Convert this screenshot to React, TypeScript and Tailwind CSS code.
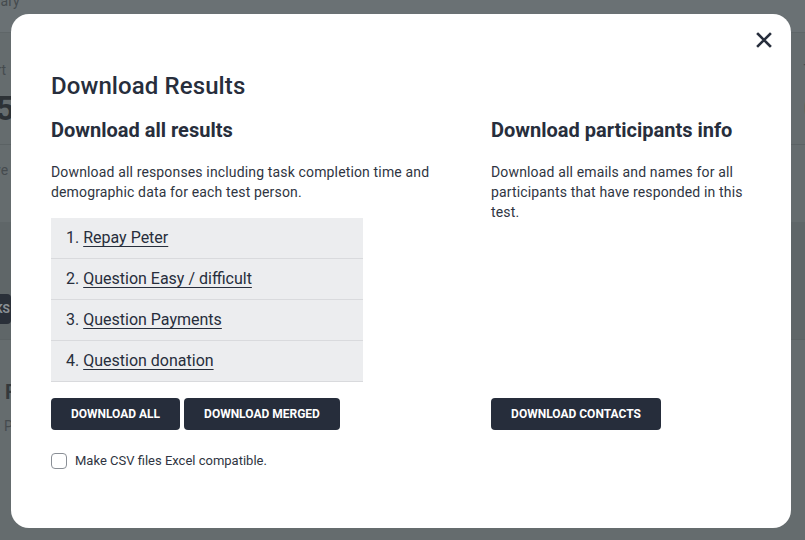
import React from "react";

const items = ["Repay Peter", "Question Easy / difficult", "Question Payments", "Question donation"];

export default function App() {
  return (
    <div
      className="relative w-[805px] h-[540px] overflow-hidden bg-[#656c6e]"
      style={{ fontFamily: "Roboto, 'Noto Sans', sans-serif" }}
    >
      {/* dimmed background page */}
      <div className="flex flex-col text-[#454b4e]">
        <div className="h-[33px] bg-[#6a7174] border-b border-[#5f6668] flex items-start">
          <span className="-ml-[40px] -mt-[9px] text-[14px]">Summary</span>
        </div>
        <div className="h-[112px] border-b border-[#5b6264] flex justify-between">
          <div className="-ml-[24px] pt-[28px] flex flex-col">
            <span className="text-[14px] leading-[18px]">Start</span>
            <span className="mt-[9px] text-[34px] font-bold leading-[40px] text-[#2d3236]">15</span>
          </div>
          <div className="-mr-[30px] pt-[28px] flex flex-col">
            <span className="text-[14px] leading-[18px]">Time</span>
            <span className="mt-[9px] text-[34px] font-bold leading-[40px] text-[#2d3236]">0</span>
          </div>
        </div>
        <div className="h-[77px] pt-[13px]">
          <span className="-ml-[6px] text-[14px] inline-block">ve</span>
        </div>
        <div className="h-[118px] bg-[#5f6668] border-b border-[#5b6264] flex flex-col justify-end pb-[15px]">
          <div className="-ml-[50px] w-[61px] h-[30px] bg-[#2a3039] rounded-[4px] flex items-center justify-end pr-[1px]">
            <span className="text-[12px] font-bold text-[#8a9095]">TASKS</span>
          </div>
        </div>
        <div className="pt-[20px] flex flex-col">
          <span className="ml-[17px] text-[11px] leading-[14px] text-[#5b6265]">T</span>
          <span className="ml-[5px] mt-[6px] text-[20px] font-bold leading-[24px] text-[#34393c]">F</span>
          <span className="ml-[4px] mt-[13px] text-[14px] leading-[18px]">P</span>
        </div>
      </div>

      {/* modal */}
      <div className="absolute left-[11px] top-[14px] w-[780px] h-[514px] rounded-[18px] bg-white text-[#272e3c]">
        <button className="absolute right-[15px] top-[14px] w-[24px] h-[24px] flex items-center justify-center">
          <svg width="16" height="16" viewBox="0 0 16 16">
            <path d="M2 2 L14 14 M14 2 L2 14" stroke="#272e3c" strokeWidth="2.6" strokeLinecap="square" />
          </svg>
        </button>
        <div className="pl-[40px] pr-[40px] pt-[56px]">
          <h1 className="text-[24px] leading-[32px] font-medium tracking-[0.1px]">Download Results</h1>
          <div className="mt-[14px] grid grid-cols-[400px_260px] gap-x-[40px]">
            <div className="flex flex-col">
              <h2 className="text-[20px] leading-[28px] font-bold">Download all results</h2>
              <p className="mt-[18px] text-[14px] leading-[20px] tracking-[0.15px] text-[#2f3542]">
                Download all responses including task completion time and demographic data for each test person.
              </p>
              <div className="mt-[16px] w-[312px] bg-[#ecedef]">
                {items.map((t, i) => (
                  <div key={t} className="h-[41px] border-b border-[#d9dadd] flex items-center pl-[15px] text-[16px]">
                    <span>{i + 1}.&nbsp;</span>
                    <span className="underline underline-offset-[3px]">{t}</span>
                  </div>
                ))}
              </div>
              <div className="mt-[16px] flex gap-[4px]">
                <button className="h-[32px] w-[129px] rounded-[4px] bg-[#262d3b] text-white text-[12px] font-bold">
                  DOWNLOAD ALL
                </button>
                <button className="h-[32px] w-[156px] rounded-[4px] bg-[#262d3b] text-white text-[12px] font-bold">
                  DOWNLOAD MERGED
                </button>
              </div>
              <label className="mt-[23px] flex items-center gap-[8px]">
                <span className="w-[16px] h-[16px] rounded-[4px] border border-[#8a8f96] bg-white"></span>
                <span className="text-[13px] leading-[16px] text-[#2f3542]">Make CSV files Excel compatible.</span>
              </label>
            </div>
            <div className="flex flex-col">
              <h2 className="text-[20px] leading-[28px] font-bold">Download participants info</h2>
              <p className="mt-[18px] text-[14px] leading-[20px] tracking-[0.15px] text-[#2f3542]">
                Download all emails and names for all participants that have responded in this test.
              </p>
              <div className="mt-[176px]">
                <button className="h-[32px] w-[170px] rounded-[4px] bg-[#262d3b] text-white text-[12px] font-bold">
                  DOWNLOAD CONTACTS
                </button>
              </div>
            </div>
          </div>
        </div>
      </div>
    </div>
  );
}
